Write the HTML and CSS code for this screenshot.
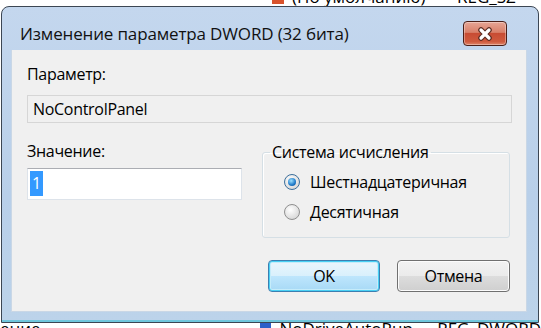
FILE: index.html
```html
<!DOCTYPE html>
<html lang="ru">
<head>
    <meta charset="UTF-8">
    <title>Изменение параметра DWORD (32 бита)</title>
    <link rel="stylesheet" href="styles.css">
</head>
<body>
    <div class="backdrop top">
        <div class="backdrop-line">
            <span class="bg-icon red"></span>
            <span class="bg-name">(По умолчанию)</span>
            <span class="bg-type">REG_SZ</span>
        </div>
    </div>

    <div class="window">
        <div class="titlebar">
            <div class="title">Изменение параметра DWORD (32 бита)</div>
            <button class="close" aria-label="Закрыть">
                <svg width="20" height="14" viewBox="0 0 20 14">
                    <path d="M6 3 L14 11 M14 3 L6 11" stroke="#5a2a20" stroke-width="5.5" stroke-linecap="round"/>
                    <path d="M6 3 L14 11 M14 3 L6 11" stroke="#fff" stroke-width="3.2" stroke-linecap="round"/>
                </svg>
            </button>
        </div>

        <div class="client">
            <div class="label">Параметр:</div>
            <div class="readonly">NoControlPanel</div>

            <div class="row">
                <div class="col-left">
                    <div class="label">Значение:</div>
                    <div class="textbox"><span class="selected">1</span></div>
                </div>
                <fieldset class="group">
                    <legend>Система исчисления</legend>
                    <div class="radio-row">
                        <span class="radio checked"></span>
                        <span>Шестнадцатеричная</span>
                    </div>
                    <div class="radio-row">
                        <span class="radio"></span>
                        <span>Десятичная</span>
                    </div>
                </fieldset>
            </div>

            <div class="buttons">
                <button class="btn default">OK</button>
                <button class="btn">Отмена</button>
            </div>
        </div>
    </div>

    <div class="backdrop bottom">
        <div class="backdrop-line">
            <span class="bg-left">ение</span>
            <span class="bg-icon blue"></span>
            <span class="bg-name">NoDriveAutoRun</span>
            <span class="bg-type">REG_DWORD</span>
        </div>
    </div>
</body>
</html>
```

FILE: styles.css
```css
body {
    margin: 0;
    width: 541px;
    height: 328px;
    overflow: hidden;
    background: #fff;
    font-family: "Open Sans", "Noto Sans", sans-serif;
    color: #000;
}

/* registry editor behind the dialog */
.backdrop {
    height: 6px;
    overflow: hidden;
}

.backdrop.bottom {
    height: 5px;
}

.backdrop-line {
    display: flex;
    align-items: center;
    height: 18px;
    font-size: 17px;
    line-height: 18px;
    white-space: nowrap;
}

.backdrop.top .backdrop-line {
    margin-top: -12px;
}

.backdrop.bottom .backdrop-line {
    margin-top: -3px;
}

.bg-left {
    width: 272px;
}

.backdrop.top .bg-icon {
    margin-left: 272px;
}

.bg-icon {
    width: 12px;
    height: 14px;
    margin-right: 8px;
}

.bg-icon.red {
    background: #d9532c;
}

.bg-icon.blue {
    background: #2d5fc8;
}

.bg-name {
    width: 165px;
    overflow: hidden;
}

/* dialog window */
.window {
    margin-left: 1px;
    width: 538px;
    height: 317px;
    box-sizing: border-box;
    border: 1px solid #3c4653;
    border-radius: 8px 8px 0 0;
    background: linear-gradient(#c4d7ee, #b8cfe9 60%, #bcd3ea);
    box-shadow: inset 0 -2px 0 #6fc6dc;
}

.titlebar {
    display: flex;
    align-items: flex-start;
    justify-content: space-between;
    height: 43px;
    box-sizing: border-box;
    padding: 14px 31px 0 18px;
}

.title {
    font-size: 17px;
    line-height: 25px;
    color: #111;
    letter-spacing: -0.15px;
}

.close {
    width: 44px;
    height: 25px;
    padding: 0;
    border: 1px solid #4b1f18;
    border-radius: 4px;
    background: linear-gradient(#e6a595, #d98069 45%, #c84c33 50%, #cf5a3e 85%, #de8469);
    box-shadow: inset 0 0 0 1px rgba(255, 255, 255, 0.35);
    display: flex;
    align-items: center;
    justify-content: center;
}

.client {
    display: flex;
    flex-direction: column;
    margin: 0 11px 0 9px;
    height: 262px;
    box-sizing: border-box;
    padding: 14px 14px 0 15px;
    background: #f0f0f0;
    border: 1px solid #c9d7e6;
    border-top: none;
    font-size: 16px;
}

.label {
    line-height: 20px;
    letter-spacing: -0.3px;
}

.readonly {
    margin-top: 11px;
    height: 28px;
    box-sizing: border-box;
    border: 1px solid #d6d6d6;
    background: #f0f0f0;
    padding-left: 5px;
    line-height: 26px;
    letter-spacing: -0.3px;
}

.row {
    display: flex;
    gap: 20px;
    margin-top: 18px;
}

.col-left {
    width: 215px;
}

.textbox {
    margin-top: 7px;
    height: 32px;
    box-sizing: border-box;
    border: 1px solid #dde3ea;
    border-top-color: #abadb3;
    background: #fff;
    padding: 2px 0 0 2px;
}

.selected {
    display: inline-block;
    background: #3399ff;
    color: #fff;
    line-height: 25px;
    padding: 0 2px;
}

.group {
    width: 248px;
    height: 96px;
    box-sizing: border-box;
    margin: 1px 0 0;
    padding: 0 0 0 7px;
    border: 1px solid #d5dfe5;
    border-radius: 3px;
    box-shadow: inset 1px 1px 0 #fff;
}

.group legend {
    padding: 0 2px;
    line-height: 20px;
    letter-spacing: -0.3px;
}

.group legend + .radio-row {
    margin-top: 5px;
}

.radio-row {
    display: flex;
    align-items: center;
    height: 30px;
    padding-left: 14px;
    gap: 10px;
    letter-spacing: -0.3px;
}

.radio {
    width: 16px;
    height: 16px;
    box-sizing: border-box;
    border-radius: 50%;
    border: 1px solid #8f8f8f;
    background: radial-gradient(circle at 40% 35%, #fff, #dcdcdc 70%, #cdcdcd);
    display: flex;
    align-items: center;
    justify-content: center;
}

.radio.checked {
    border-color: #3c6f9c;
}

.radio.checked::after {
    content: "";
    width: 8px;
    height: 8px;
    border-radius: 50%;
    background: radial-gradient(circle at 40% 35%, #9be0ff, #1e79c8 60%, #13508f);
}

.buttons {
    display: flex;
    justify-content: flex-end;
    gap: 17px;
    margin-top: 22px;
    padding-right: 2px;
}

.btn {
    width: 113px;
    height: 32px;
    border: 1px solid #707070;
    border-radius: 4px;
    background: linear-gradient(#f2f2f2, #ebebeb 50%, #dddddd 50%, #cfcfcf);
    box-shadow: inset 0 0 0 1px #fcfcfc;
    font-family: "Open Sans", "Noto Sans", sans-serif;
    font-size: 16px;
    letter-spacing: -0.3px;
    color: #000;
    padding: 0;
}

.btn.default {
    width: 112px;
    border-color: #3c7fb1;
    box-shadow: inset 0 0 0 1px #48d0f4, inset 0 0 0 2px #c6ecfa;
    background: linear-gradient(#eaf6fd, #d9f0fc 50%, #bee6fd 50%, #a7d9f5);
}
```
